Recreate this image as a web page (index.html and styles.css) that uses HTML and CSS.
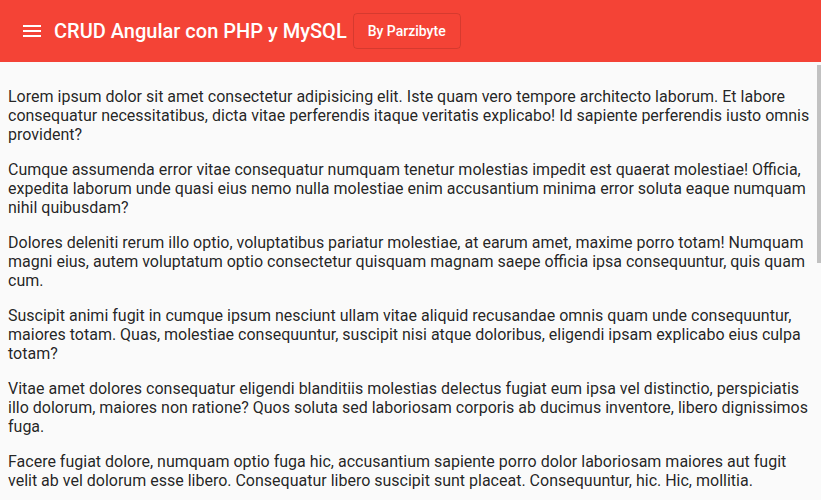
FILE: index.html
```html
<!DOCTYPE html>
<html lang="es">
<head>
    <meta charset="UTF-8">
    <meta name="viewport" content="width=device-width, initial-scale=1.0">
    <title>CRUD Angular con PHP y MySQL</title>
    <link rel="stylesheet" href="styles.css">
</head>
<body>
    <header class="toolbar">
        <button class="menu-btn" aria-label="Menú">
            <svg viewBox="0 0 24 24" width="24" height="24"><path fill="currentColor" d="M3 18h18v-2H3v2zm0-5h18v-2H3v2zm0-7v2h18V6H3z"/></svg>
        </button>
        <span class="title">CRUD Angular con PHP y MySQL</span>
        <a class="stroked-btn">By Parzibyte</a>
    </header>

    <div class="content-wrap">
        <main class="content">
            <p>Lorem ipsum dolor sit amet consectetur adipisicing elit. Iste quam vero tempore architecto laborum. Et labore consequatur necessitatibus, dicta vitae perferendis itaque veritatis explicabo! Id sapiente perferendis iusto omnis provident?</p>
            <p>Cumque assumenda error vitae consequatur numquam tenetur molestias impedit est quaerat molestiae! Officia, expedita laborum unde quasi eius nemo nulla molestiae enim accusantium minima error soluta eaque numquam nihil quibusdam?</p>
            <p>Dolores deleniti rerum illo optio, voluptatibus pariatur molestiae, at earum amet, maxime porro totam! Numquam magni eius, autem voluptatum optio consectetur quisquam magnam saepe officia ipsa consequuntur, quis quam cum.</p>
            <p>Suscipit animi fugit in cumque ipsum nesciunt ullam vitae aliquid recusandae omnis quam unde consequuntur, maiores totam. Quas, molestiae consequuntur, suscipit nisi atque doloribus, eligendi ipsam explicabo eius culpa totam?</p>
            <p>Vitae amet dolores consequatur eligendi blanditiis molestias delectus fugiat eum ipsa vel distinctio, perspiciatis illo dolorum, maiores non ratione? Quos soluta sed laboriosam corporis ab ducimus inventore, libero dignissimos fuga.</p>
            <p>Facere fugiat dolore, numquam optio fuga hic, accusantium sapiente porro dolor laboriosam maiores aut fugit velit ab vel dolorum esse libero. Consequatur libero suscipit sunt placeat. Consequuntur, hic. Hic, mollitia.</p>
            <p>Quibusdam eveniet tempora, nesciunt cupiditate minus voluptates ipsum dignissimos aliquam repellendus laboriosam, iure veniam at numquam. Ipsa sequi accusamus aut voluptatibus, autem reiciendis quod corrupti labore tempora.</p>
            <p>Eaque neque rem sequi incidunt deserunt, minima voluptas, corporis exercitationem quam eos sint dolore aspernatur earum ut nisi laudantium tenetur veritatis odit hic quidem alias velit delectus omnis mollitia.</p>
            <p>Ratione ad dolorem sapiente ullam, aliquid officiis accusamus vero iusto eveniet illum qui quos dolor soluta earum voluptatum provident, deleniti porro ex asperiores? Laudantium, nemo. Voluptatem, cumque nostrum.</p>
            <p>Nobis architecto libero voluptas id, quae repellat maxime dolorem ducimus laborum tenetur commodi quas doloremque nesciunt quos sunt sed obcaecati provident? Minus quibusdam magnam quia sit molestias accusantium.</p>
            <p>Perferendis repellendus illum at aperiam accusantium expedita saepe molestiae, obcaecati fugiat excepturi ipsam temporibus nostrum amet ullam. Ad, laudantium iure vitae placeat quas tenetur sequi rerum atque.</p>
            <p>Officiis sunt hic corporis, ut dolor sed exercitationem dolorum animi cumque ducimus quia. Praesentium numquam ratione quod fugiat enim nemo nihil, voluptate quasi expedita necessitatibus dolore aliquam.</p>
        </main>
        <div class="scroll-thumb"></div>
    </div>
</body>
</html>
```

FILE: styles.css
```css
* {
    box-sizing: border-box;
}

html, body {
    height: 100%;
}

body {
    margin: 0;
    display: flex;
    flex-direction: column;
    overflow: hidden;
    font-family: Roboto, "Helvetica Neue", sans-serif;
    background: #fafafa;
    color: rgba(0, 0, 0, 0.87);
}

/* Toolbar */
.toolbar {
    flex: 0 0 62px;
    display: flex;
    align-items: center;
    padding: 0 16px 0 20px;
    background: #f44336;
    color: #fff;
}

.menu-btn {
    display: flex;
    background: none;
    border: none;
    padding: 0;
    margin: 0 10px 0 0;
    color: #fff;
    cursor: pointer;
}

.title {
    font-size: 20px;
    font-weight: 500;
}

.stroked-btn {
    display: inline-flex;
    align-items: center;
    height: 36px;
    margin-left: 6px;
    padding: 0 14px;
    border: 1px solid rgba(0, 0, 0, 0.12);
    border-radius: 4px;
    font-size: 14px;
    font-weight: 500;
    cursor: pointer;
}

/* Content */
.content-wrap {
    position: relative;
    flex: 1;
    min-height: 0;
}

.content {
    height: 100%;
    overflow-y: auto;
    padding: 9px 8px 8px 8px;
    font-size: 16px;
    line-height: 19px;
    scrollbar-width: none;
}

.content p {
    margin: 16px 0;
}

.scroll-thumb {
    position: absolute;
    top: 3px;
    right: 0;
    width: 4px;
    height: 198px;
    background: #c1c1c1;
}
```
